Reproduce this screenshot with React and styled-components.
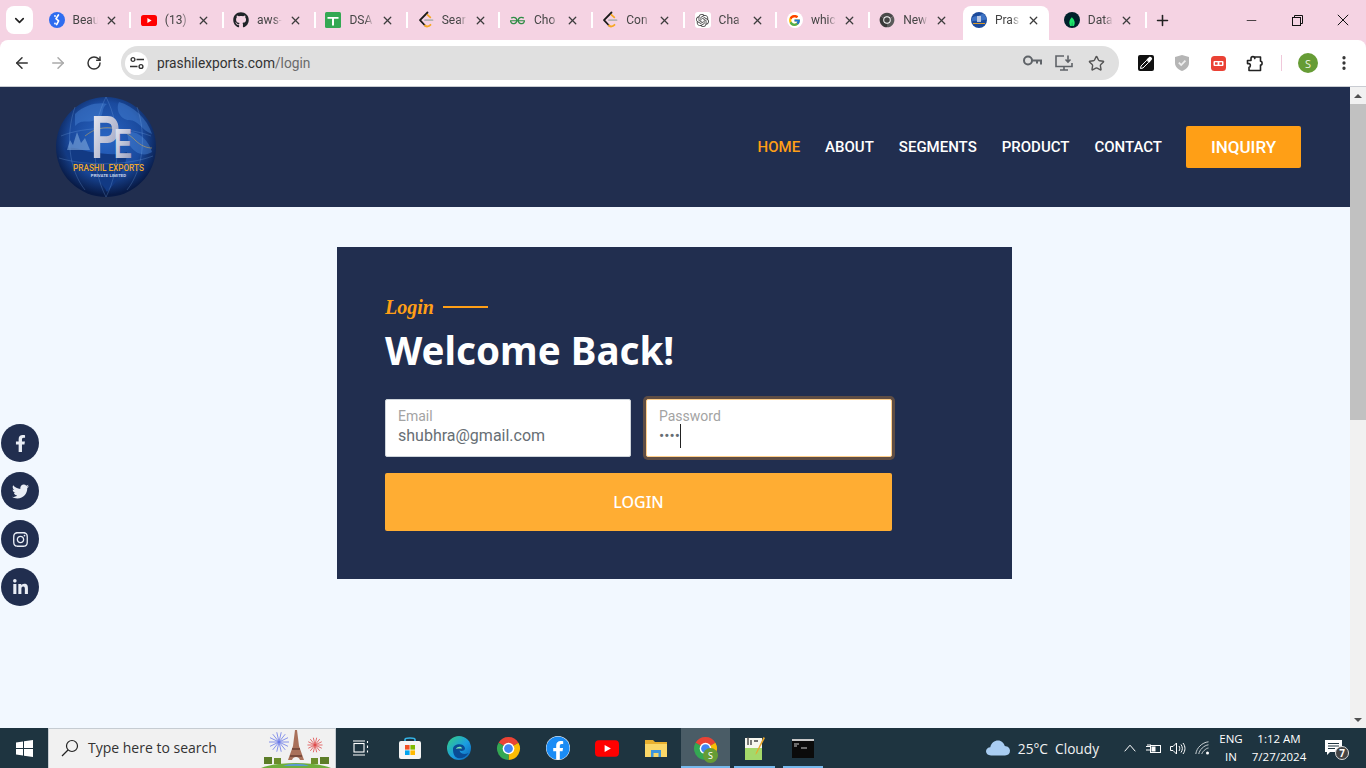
import styled, { createGlobalStyle } from 'styled-components'
import { FaFacebookF, FaTwitter, FaInstagram, FaLinkedinIn, FaGithub, FaFacebook } from 'react-icons/fa'
import { FcGoogle } from 'react-icons/fc'
import { SiOpenai, SiGeeksforgeeks, SiMongodb } from 'react-icons/si'
import { ArrowLeft, ArrowRight, RotateCw, Star, ChevronDown, X, Plus, Minus, EllipsisVertical } from 'lucide-react'

const GlobalStyle = createGlobalStyle`
    * { box-sizing: border-box; }
    html, body { margin: 0; padding: 0; overflow: hidden; }
    body { font-family: "Roboto", sans-serif; }
`

const navy = '#212e4f'
const orange = '#ff9f16'

function ChromeLogo({ size = 24, dark }) {
    return (
        <svg width={size} height={size} viewBox="0 0 24 24">
            <path d="M2.47 6.5A11 11 0 0 1 21.53 6.5L12 12Z" fill={dark ? '#4a4a4a' : '#ea4335'} />
            <path d="M21.53 6.5A11 11 0 0 1 12 23L12 12Z" fill={dark ? '#5a5a5a' : '#fbbc05'} />
            <path d="M12 23A11 11 0 0 1 2.47 6.5L12 12Z" fill={dark ? '#3a3a3a' : '#34a853'} />
            <circle cx="12" cy="12" r="5.6" fill="#fff" />
            <circle cx="12" cy="12" r="4.2" fill={dark ? '#444' : '#4285f4'} />
        </svg>
    )
}

function LeetFav() {
    return (
        <svg width="16" height="18" viewBox="0 0 16 18" fill="none" strokeLinecap="round" strokeWidth="1.8">
            <path d="M9.5 1.5 2 9.2 7 14.5" stroke="#1a1a1a" strokeLinejoin="round" />
            <path d="M7 14.5C8.5 16 10.5 15.8 12.5 13.8" stroke="#f7a823" />
            <path d="M7 9.2H14.5" stroke="#b3b3b3" />
            <path d="M9.5 3.8 12.3 6.3" stroke="#f7a823" />
        </svg>
    )
}

function BlueFav() {
    return (
        <svg width="16" height="16" viewBox="0 0 16 16">
            <circle cx="8" cy="8" r="8" fill="#2f6cf0" />
            <path d="M9.4 3 7 6.6 9.6 8.8 7.6 12.6" fill="none" stroke="#fff" strokeWidth="1.7" strokeLinecap="round" strokeLinejoin="round" />
            <circle cx="6" cy="4" r=".9" fill="#fff" />
            <circle cx="6" cy="11.5" r=".9" fill="#fff" />
        </svg>
    )
}

function YoutubeFav({ width = 16, height = 11 }) {
    return (
        <svg width={width} height={height} viewBox="0 0 16 11">
            <rect width="16" height="11" rx="2.6" fill="#f00" />
            <path d="M6.4 3.1 10.6 5.5 6.4 7.9Z" fill="#fff" />
        </svg>
    )
}

function SheetFav() {
    return (
        <svg width="16" height="16" viewBox="0 0 16 16">
            <rect width="16" height="16" rx="1.5" fill="#34a853" />
            <path d="M2.5 5H13.5V6.8H9V13.5H7V6.8H2.5Z" fill="#fff" />
        </svg>
    )
}

function GlobeFav() {
    return (
        <svg width="16" height="16" viewBox="0 0 16 16">
            <circle cx="8" cy="8" r="8" fill="#1c4a9a" />
            <path d="M1 6C4 3 7 5 9 3L12 1.5C14 3 15.5 5.5 15.8 8 12 7 10 10 6 9 4 8.5 2 9 .4 9.5Z" fill="#3d72c4" />
            <rect x="6" y="4" width="4" height="6" fill="#cfd6e6" opacity=".85" />
            <rect x="2" y="11" width="12" height="1" fill="#d99a2b" />
        </svg>
    )
}

function MongoFav() {
    return (
        <svg width="16" height="16" viewBox="0 0 16 16">
            <circle cx="8" cy="8" r="8" fill="#00212b" />
            <foreignObject x="2" y="2" width="12" height="12">
                <SiMongodb size={12} color="#1ee66b" />
            </foreignObject>
        </svg>
    )
}

const tabs = [
    { title: 'Beau', icon: <BlueFav /> },
    { title: '(13)', icon: <YoutubeFav /> },
    { title: 'aws-', icon: <FaGithub size={16} color="#1f2328" /> },
    { title: 'DSA', icon: <SheetFav /> },
    { title: 'Sear', icon: <LeetFav /> },
    { title: 'Cho', icon: <SiGeeksforgeeks size={15} color="#2f8d46" /> },
    { title: 'Con', icon: <LeetFav /> },
    { title: 'Cha', icon: <SiOpenai size={13} color="#444" />, chip: true },
    { title: 'whic', icon: <FcGoogle size={13} />, chip: true, round: true },
    { title: 'New', icon: <ChromeLogo size={16} dark /> },
    { title: 'Pras', icon: <GlobeFav />, active: true },
    { title: 'Data', icon: <MongoFav /> },
]

const navLinks = ['Home', 'About', 'Segments', 'Product', 'Contact']

const socials = [FaFacebookF, FaTwitter, FaInstagram, FaLinkedinIn]

export default function App() {
    return (
        <Screen>
            <GlobalStyle />

            <TabStrip>
                <TabSearch><ChevronDown size={15} strokeWidth={2.6} color="#222" /></TabSearch>
                {tabs.map((tab, i) => (
                    <Tab key={i} $active={tab.active} $noSep={tab.active || tab.title === 'New'}>
                        <Favicon $chip={tab.chip} $round={tab.round}>{tab.icon}</Favicon>
                        <TabTitle>{tab.title}</TabTitle>
                        <TabClose><X size={13} strokeWidth={2.4} color="#3c3c3c" /></TabClose>
                    </Tab>
                ))}
                <NewTab><Plus size={17} strokeWidth={2.2} color="#222" /></NewTab>
                <WindowControls>
                    <WindowButton><Minus size={15} strokeWidth={1.2} color="#111" /></WindowButton>
                    <WindowButton>
                        <svg width="11" height="11" viewBox="0 0 11 11" fill="none" stroke="#111">
                            <rect x=".5" y="2.5" width="8" height="8" />
                            <path d="M2.5 2.5V.5H10.5V8.5H8.5" />
                        </svg>
                    </WindowButton>
                    <WindowButton>
                        <svg width="12" height="12" viewBox="0 0 12 12" stroke="#111" strokeWidth="1"><path d="M.8.8 11.2 11.2M11.2.8.8 11.2" /></svg>
                    </WindowButton>
                </WindowControls>
            </TabStrip>

            <Toolbar>
                <ToolButton><ArrowLeft size={18} strokeWidth={2} color="#333" /></ToolButton>
                <ToolButton><ArrowRight size={18} strokeWidth={2} color="#aaa" /></ToolButton>
                <ToolButton><RotateCw size={16} strokeWidth={2.2} color="#333" /></ToolButton>
                <Omnibox>
                    <SiteInfo>
                        <svg width="14" height="14" viewBox="0 0 14 14" fill="none" stroke="#333" strokeWidth="1.4">
                            <circle cx="3" cy="3.5" r="1.9" />
                            <path d="M6.5 3.5H14M0 10.5H7.5" />
                            <circle cx="11" cy="10.5" r="1.9" />
                        </svg>
                    </SiteInfo>
                    <Url>prashilexports.com<UrlPath>/login</UrlPath></Url>
                    <OmniIcons>
                        <OmniIcon>
                            <svg width="19" height="11" viewBox="0 0 19 11" fill="none" stroke="#5f6368" strokeWidth="2">
                                <circle cx="5" cy="5.5" r="4" />
                                <path d="M9 5.5H18V9.5M14 5.5V8.5" />
                            </svg>
                        </OmniIcon>
                        <OmniIcon>
                            <svg width="18" height="16" viewBox="0 0 18 16" fill="none" stroke="#5f6368" strokeWidth="1.6">
                                <path d="M9 1H1V11.5H17V8M5 15H13M9 11.5V15" />
                                <path d="M13 .5V6.5M10.5 4.5 13 7 15.5 4.5" />
                            </svg>
                        </OmniIcon>
                        <OmniIcon><Star size={17} strokeWidth={2} color="#555" /></OmniIcon>
                    </OmniIcons>
                </Omnibox>
                <Extensions>
                    <ToolButton>
                        <svg width="16" height="16" viewBox="0 0 16 16">
                            <rect width="16" height="16" rx="2" fill="#111" />
                            <path d="M2.5 13.5 3 11 8.8 5.2 10.8 7.2 5 13Z" fill="none" stroke="#fff" />
                            <path d="M8.5 4.5 11.5 1.8C12.5 1 14.8 3.2 14 4.3L11.5 7.5Z" fill="#fff" />
                        </svg>
                    </ToolButton>
                    <ToolButton>
                        <svg width="16" height="18" viewBox="0 0 16 18">
                            <path d="M8 1 15 3V9C15 13 11.5 15.7 8 17 4.5 15.7 1 13 1 9V3Z" fill="#b5b5b5" />
                            <path d="M4.8 8.6 7.2 11 11.4 6.6" fill="none" stroke="#eee" strokeWidth="1.8" />
                        </svg>
                    </ToolButton>
                    <ToolButton>
                        <svg width="15" height="15" viewBox="0 0 15 15">
                            <rect width="15" height="15" rx="3.5" fill="#ea4235" />
                            <rect x="2.5" y="5" width="10" height="5" rx="1" fill="#fff" />
                            <rect x="4" y="6.3" width="2.6" height="2.4" fill="#ea4235" />
                            <rect x="8.4" y="6.3" width="2.6" height="2.4" fill="#ea4235" />
                        </svg>
                    </ToolButton>
                    <ToolButton>
                        <svg width="17" height="17" viewBox="0 0 17 17" fill="none" stroke="#222" strokeWidth="1.6" strokeLinejoin="round">
                            <path d="M1.5 5.5H5V3.6C5 1 8.8 1 8.8 3.6V2H14.5V6.3C16.6 6.3 16.6 10 14.5 10V15.5H3V12.3C4.8 12.3 4.8 8.6 3 8.6L1.5 8.6Z" />
                        </svg>
                    </ToolButton>
                    <ToolSeparator />
                    <ToolButton><Avatar>S</Avatar></ToolButton>
                    <ToolButton><EllipsisVertical size={18} strokeWidth={2.4} color="#333" /></ToolButton>
                </Extensions>
            </Toolbar>

            <Viewport>
                <Page>
                    <Header>
                        <Logo />
                        <Nav>
                            {navLinks.map((link, i) => (
                                <NavLink key={link} $active={i === 0}>{link}</NavLink>
                            ))}
                            <InquiryButton>Inquiry</InquiryButton>
                        </Nav>
                    </Header>

                    <Main>
                        <LoginCard>
                            <Eyebrow>Login</Eyebrow>
                            <Heading>Welcome Back!</Heading>
                            <FormGrid>
                                <Field>
                                    <FieldLabel>Email</FieldLabel>
                                    <FieldValue>shubhra@gmail.com</FieldValue>
                                </Field>
                                <Field $focused>
                                    <FieldLabel>Password</FieldLabel>
                                    <FieldValue $secret>••••<Caret /></FieldValue>
                                </Field>
                                <LoginButton>Login</LoginButton>
                            </FormGrid>
                        </LoginCard>
                    </Main>

                    <SocialRail>
                        {socials.map((Icon, i) => (
                            <SocialLink key={i}><Icon size={17} /></SocialLink>
                        ))}
                    </SocialRail>
                </Page>

                <Scrollbar>
                    <ScrollArrow $up />
                    <ScrollThumb />
                    <ScrollArrow />
                </Scrollbar>
            </Viewport>

            <Taskbar>
                <StartButton>
                    <svg width="17" height="17" viewBox="0 0 17 17" fill="#fff">
                        <path d="M0 2.4 7 1.4V8H0ZM8 1.2 17 0V8H8ZM0 9H7V15.6L0 14.6ZM8 9H17V17L8 15.8Z" />
                    </svg>
                </StartButton>
                <SearchBox>
                    <svg width="18" height="18" viewBox="0 0 18 18" fill="none" stroke="#222" strokeWidth="1.2">
                        <circle cx="11" cy="7" r="5.5" />
                        <path d="M7 11 1 17" />
                    </svg>
                    <SearchText>Type here to search</SearchText>
                    <SearchArt>
                        <EiffelArt />
                    </SearchArt>
                </SearchBox>
                <TaskIcons />
                <Tray>
                    <Weather>
                        <svg width="24" height="16" viewBox="0 0 24 16">
                            <path d="M5 15.5C1.8 15.5 0 13.5 0 11.3 0 9 2 7.3 4.3 7.3 5 3 8.5 .5 12 .5 15.5.5 18 3 18.8 6 21.8 6.2 24 8 24 10.8 24 13.6 22 15.5 19 15.5Z" fill="#a9cdf2" />
                        </svg>
                        <WeatherText>25°C&nbsp;&nbsp;Cloudy</WeatherText>
                    </Weather>
                    <TrayIcon>
                        <svg width="12" height="8" viewBox="0 0 12 8" fill="none" stroke="#fff"><path d="M.7 7.3 6 1.2 11.3 7.3" /></svg>
                    </TrayIcon>
                    <TrayIcon>
                        <svg width="16" height="11" viewBox="0 0 16 11" fill="none" stroke="#fff">
                            <rect x="4.5" y="2.5" width="10" height="7" />
                            <rect x="5.5" y="3.5" width="4" height="5" fill="#fff" stroke="none" />
                            <path d="M0 3.5H5M0 7H5M2 1V3.5M4 1V3.5" />
                        </svg>
                    </TrayIcon>
                    <TrayIcon>
                        <svg width="16" height="13" viewBox="0 0 16 13" fill="none" stroke="#fff">
                            <path d="M.5 4.5H3L6.5 1V12L3 8.5H.5Z" />
                            <path d="M9 4C10 5.5 10 7.5 9 9M11 2.5C12.8 5 12.8 8 11 10.5M13 1C15.6 4.5 15.6 8.5 13 12" />
                        </svg>
                    </TrayIcon>
                    <TrayIcon>
                        <svg width="15" height="14" viewBox="0 0 15 14" fill="none" stroke="#c9d0d4">
                            <path d="M.8 13C1.5 7 7 1.5 13.5.8M3.8 13C4.3 9 9 4.3 13.5 3.8M6.8 13C7 11 11 7.2 13.5 7" />
                            <circle cx="12.5" cy="12" r="1.5" fill="#fff" stroke="none" />
                        </svg>
                    </TrayIcon>
                    <TrayLang>ENG<br />IN</TrayLang>
                    <TrayClock>1:12 AM<br />7/27/2024</TrayClock>
                    <NotifyArea>
                        <svg width="20" height="19" viewBox="0 0 20 19">
                            <path d="M1 1H18V13H6L3 16V13H1Z" fill="#fff" />
                            <path d="M4 4.5H15M4 7H15M4 9.5H11" stroke="#1e3440" />
                        </svg>
                        <NotifyBadge>7</NotifyBadge>
                    </NotifyArea>
                </Tray>
            </Taskbar>
        </Screen>
    )
}

function Logo() {
    return (
        <svg width="102" height="102" viewBox="0 0 102 102" style={{ flexShrink: 0 }}>
            <defs>
                <radialGradient id="globe" cx="50%" cy="42%" r="56%">
                    <stop offset="0%" stopColor="#2a66c4" />
                    <stop offset="65%" stopColor="#1a4a9e" />
                    <stop offset="100%" stopColor="#081a45" />
                </radialGradient>
                <linearGradient id="mono" x1="0" y1="0" x2="1" y2="1">
                    <stop offset="0%" stopColor="#f2f3f8" />
                    <stop offset="100%" stopColor="#8d93b5" />
                </linearGradient>
            </defs>
            <circle cx="51" cy="51" r="50" fill="url(#globe)" />
            <path d="M20 18C30 8 45 6 52 8 44 14 52 20 40 24 32 28 28 22 20 30ZM64 6C78 10 92 22 97 38 86 34 84 24 74 24 66 24 60 14 64 6ZM72 36C82 34 94 44 97 56 88 62 78 56 74 48Z" fill="#4a86d8" opacity=".45" />
            <path d="M8 52C18 50 26 54 36 56 50 58 60 60 72 56 72 68 64 84 52 96 48 88 42 84 36 76 26 74 14 66 8 52Z" fill="#123a84" />
            <path d="M12 54 15 44 18 49 22 36 26 47 30 42 35 54Z" fill="#7fa8dc" opacity=".6" />
            <path d="M6 40C30 30 70 30 96 40M4 62C30 70 72 70 98 60M51 1C36 30 36 72 51 101M51 1C66 30 66 72 51 101M20 11C10 40 14 74 30 94M82 11C92 40 88 74 72 94" fill="none" stroke="#7fb0ea" strokeWidth=".5" opacity=".5" />
            <path d="M30 40C50 24 70 34 80 44 86 50 92 52 97 52" fill="none" stroke="#e0b24a" strokeWidth=".5" />
            <text x="36" y="62" textLength="29" lengthAdjust="spacingAndGlyphs" fontFamily="Liberation Sans, sans-serif" fontWeight="700" fontSize="62" fill="url(#mono)">P</text>
            <text x="59" y="62" textLength="18" lengthAdjust="spacingAndGlyphs" fontFamily="Liberation Sans, sans-serif" fontWeight="700" fontSize="43" fill="url(#mono)">E</text>
            <text x="53.5" y="75" textAnchor="middle" fontFamily="Roboto, sans-serif" fontWeight="500" fontSize="8.2" fill="#f0a92c">PRASHIL EXPORTS</text>
            <text x="53.5" y="80.5" textAnchor="middle" fontFamily="Roboto, sans-serif" fontWeight="700" fontSize="4.4" fill="#c8d4ee">PRIVATE LIMITED</text>
        </svg>
    )
}

function EiffelArt() {
    const burst = (cx, cy, r, color) =>
        Array.from({ length: 14 }, (_, i) => {
            const a = (i / 14) * Math.PI * 2
            return <line key={i} x1={cx} y1={cy} x2={cx + Math.cos(a) * r} y2={cy + Math.sin(a) * r} stroke={color} strokeWidth=".8" />
        })
    return (
        <svg width="78" height="40" viewBox="0 0 78 40">
            {burst(22, 14, 10, '#6a78e8')}
            {burst(58, 17, 7.5, '#e04a4a')}
            <path d="M38 2 40 2 42 18 47 32H43C42 28 36 28 35 32H31L36 18Z" fill="#a9705a" />
            <path d="M35 20H43V22H35ZM33 27H45V29H33Z" fill="#7a4b3c" />
            <ellipse cx="39" cy="44" rx="39" ry="9" fill="#6fae3c" />
            <path d="M26 38C32 35 46 35 52 38Z" fill="#5a9bd0" />
            <rect x="7" y="29" width="8" height="7" fill="#5c7d28" />
            <rect x="17" y="30" width="7" height="6" fill="#6b8d2c" />
            <rect x="54" y="30" width="7" height="6" fill="#6b8d2c" />
            <rect x="63" y="29" width="9" height="7" fill="#5c7d28" />
        </svg>
    )
}

function TaskIcons() {
    return (
        <TaskRow>
            <TaskCell>
                <svg width="16" height="16" viewBox="0 0 16 16" fill="none" stroke="#fff" strokeWidth="1.1">
                    <rect x="1" y="3.5" width="10" height="8.5" />
                    <path d="M0 1H12M0 15H12M14.5 1V3M14.5 5.5V8M14.5 10.5V12.5" />
                </svg>
            </TaskCell>
            <TaskCell>
                <svg width="24" height="24" viewBox="0 0 24 24">
                    <path d="M7 5V3.5C7 1.5 17 1.5 17 3.5V5" fill="none" stroke="#35b5e8" strokeWidth="1.6" />
                    <rect x="1" y="5" width="22" height="18" rx="2" fill="#f4f4f4" />
                    <rect x="7" y="9" width="4.6" height="4.6" fill="#f25022" />
                    <rect x="12.4" y="9" width="4.6" height="4.6" fill="#7fba00" />
                    <rect x="7" y="14.4" width="4.6" height="4.6" fill="#00a4ef" />
                    <rect x="12.4" y="14.4" width="4.6" height="4.6" fill="#ffb900" />
                </svg>
            </TaskCell>
            <TaskCell>
                <svg width="24" height="24" viewBox="0 0 24 24">
                    <defs>
                        <linearGradient id="edge" x1="0" y1="0" x2="1" y2="1">
                            <stop offset="0%" stopColor="#35d07f" />
                            <stop offset="55%" stopColor="#1b9de2" />
                            <stop offset="100%" stopColor="#0b5fb0" />
                        </linearGradient>
                    </defs>
                    <circle cx="12" cy="12" r="12" fill="url(#edge)" />
                    <path d="M6 13C6 8 16 6 18 12 18.5 15 14 15.5 12.5 14.5 13 18 18 19 21.5 17 19 21.5 14 23 10.5 22 6.5 20.5 6 16 6 13Z" fill="#0a4c95" />
                    <path d="M9 13C10 10 15 10 15 12.5H11C10.3 12.5 9.5 12.7 9 13Z" fill="#7fe6b0" />
                </svg>
            </TaskCell>
            <TaskCell><ChromeLogo size={25} /></TaskCell>
            <TaskCell><FaFacebook size={24} color="#1a8cf5" style={{ background: '#fff', borderRadius: '50%' }} /></TaskCell>
            <TaskCell><YoutubeFav width={24} height={17} /></TaskCell>
            <TaskCell>
                <svg width="22" height="18" viewBox="0 0 22 18">
                    <path d="M0 1H8L10 3H22V17H0Z" fill="#e9b02f" />
                    <path d="M0 5H22V18H0Z" fill="#fbd768" />
                    <path d="M6 18V11H16V18H13.5V14H8.5V18Z" fill="#3e95de" />
                </svg>
            </TaskCell>
            <TaskCell $active>
                <ChromeLogo size={25} />
                <ChromeBadge>S</ChromeBadge>
            </TaskCell>
            <TaskCell $open>
                <svg width="22" height="24" viewBox="0 0 22 24">
                    <rect x="1" y="2" width="17" height="22" fill="#a5d86a" />
                    <rect x="1" y="2" width="17" height="10" fill="#f7f7ef" />
                    <path d="M4 1V9M7 4V9M10 5H14" stroke="#444" strokeWidth="1.4" />
                    <path d="M21 2 13 17 11.5 19 12 16.5 19.5 1Z" fill="#e9a72e" />
                </svg>
            </TaskCell>
            <TaskCell $open>
                <svg width="22" height="19" viewBox="0 0 22 19">
                    <rect width="22" height="19" fill="#0b0b0b" />
                    <rect width="22" height="2" fill="#c8c8c8" />
                    <path d="M2 5H7M2 7H5M9 9H15" stroke="#ccc" />
                </svg>
            </TaskCell>
        </TaskRow>
    )
}

const Screen = styled.div`
    width: 1366px;
    height: 768px;
    display: flex;
    flex-direction: column;
    overflow: hidden;
    background-color: #f5d3e3;
`

/* browser chrome */
const TabStrip = styled.div`
    height: 40px;
    display: flex;
    align-items: flex-end;
    padding-left: 6px;
`
const TabSearch = styled.div`
    width: 27px;
    height: 28px;
    margin: 0 5px 6px 0;
    background-color: #fff;
    border-radius: 8px;
    display: flex;
    align-items: center;
    justify-content: center;
`
const Tab = styled.div`
    position: relative;
    flex: none;
    width: ${({ $active }) => ($active ? '86.3px' : '92.3px')};
    height: 34px;
    margin-left: ${({ $active }) => ($active ? '2px' : '0')};
    margin-right: ${({ $active }) => ($active ? '4px' : '0')};
    padding: 0 0 6px ${({ $active }) => ($active ? '8px' : '10.5px')};
    display: flex;
    align-items: center;
    background-color: ${({ $active }) => ($active ? '#fff' : 'transparent')};
    border-radius: 8px 8px 0 0;
    &::after {
        content: '';
        display: ${({ $noSep }) => ($noSep ? 'none' : 'block')};
        position: absolute;
        right: -1px;
        top: 6px;
        width: 2px;
        height: 16px;
        background-color: #fff;
    }
`
const Favicon = styled.span`
    flex: none;
    width: 16px;
    height: 16px;
    display: flex;
    align-items: center;
    justify-content: center;
    background-color: ${({ $chip }) => ($chip ? '#fff' : 'transparent')};
    border-radius: ${({ $round }) => ($round ? '50%' : '3px')};
`
const TabTitle = styled.span`
    width: 25px;
    margin-left: 8px;
    overflow: hidden;
    white-space: nowrap;
    font-family: "Roboto", sans-serif;
    font-size: 12px;
    color: #454545;
    -webkit-mask-image: linear-gradient(to right, #000 65%, transparent);
    mask-image: linear-gradient(to right, #000 65%, transparent);
`
const TabClose = styled.span`
    display: flex;
    margin-left: 7px;
`
const NewTab = styled.div`
    width: 34px;
    height: 40px;
    display: flex;
    align-items: center;
    justify-content: center;
`
const WindowControls = styled.div`
    margin-left: auto;
    display: flex;
`
const WindowButton = styled.div`
    width: 46px;
    height: 40px;
    display: flex;
    align-items: center;
    justify-content: center;
`
const Toolbar = styled.div`
    height: 47px;
    display: flex;
    align-items: flex-start;
    padding: 6px 0 0 4px;
    background-color: #fff;
    border-radius: 8px 8px 0 0;
    border-bottom: 1px solid #c9ccd2;
`
const ToolButton = styled.div`
    flex: none;
    width: 36px;
    height: 34px;
    display: flex;
    align-items: center;
    justify-content: center;
`
const Omnibox = styled.div`
    width: 998px;
    height: 34px;
    margin-left: 9px;
    padding: 0 7px 0 4px;
    display: flex;
    align-items: center;
    background-color: #e0e0e0;
    border-radius: 17px;
`
const SiteInfo = styled.div`
    width: 23px;
    height: 23px;
    display: flex;
    align-items: center;
    justify-content: center;
    background-color: #fff;
    border-radius: 50%;
`
const Url = styled.div`
    margin-left: 9px;
    font-family: "Roboto", sans-serif;
    font-size: 13.75px;
    color: #333;
`
const UrlPath = styled.span`
    color: #6b6b6b;
`
const OmniIcons = styled.div`
    margin-left: auto;
    display: flex;
`
const OmniIcon = styled.div`
    width: 32px;
    display: flex;
    justify-content: center;
`
const Extensions = styled.div`
    display: flex;
    margin-left: 9px;
`
const ToolSeparator = styled.div`
    width: 18px;
    height: 34px;
    display: flex;
    justify-content: center;
    align-items: center;
    &::before {
        content: '';
        width: 1px;
        height: 16px;
        background-color: #f0c8da;
    }
`
const Avatar = styled.div`
    width: 20px;
    height: 20px;
    display: flex;
    align-items: center;
    justify-content: center;
    background-color: #669c35;
    border-radius: 50%;
    color: #e8f1dc;
    font-family: "Noto Sans", sans-serif;
    font-size: 11px;
`

/* page */
const Viewport = styled.div`
    flex: 1;
    min-height: 0;
    display: flex;
`
const Page = styled.div`
    position: relative;
    flex: 1;
    background-color: #f2f8ff;
`
const Header = styled.header`
    height: 120px;
    padding: 0 49px 0 55px;
    display: flex;
    align-items: center;
    justify-content: space-between;
    background-color: ${navy};
`
const Nav = styled.nav`
    display: flex;
    align-items: center;
    gap: 25px;
`
const NavLink = styled.a`
    font-family: "Roboto", sans-serif;
    font-size: 15px;
    font-weight: 500;
    text-transform: uppercase;
    color: ${({ $active }) => ($active ? orange : '#fff')};
`
const InquiryButton = styled.a`
    width: 115px;
    height: 42px;
    margin-left: -1px;
    display: flex;
    align-items: center;
    justify-content: center;
    background-color: ${orange};
    border-radius: 2px;
    font-family: "Roboto", sans-serif;
    font-size: 17px;
    font-weight: 500;
    text-transform: uppercase;
    color: #fff;
`
const Main = styled.main`
    display: flex;
    justify-content: center;
    padding: 40px 1px 0 0;
`
const LoginCard = styled.section`
    width: 675px;
    height: 332px;
    padding: 48px;
    background-color: ${navy};
`
const Eyebrow = styled.div`
    display: flex;
    align-items: center;
    gap: 9px;
    height: 25px;
    font-family: "Liberation Serif", serif;
    font-style: italic;
    font-weight: 700;
    font-size: 20px;
    color: ${orange};
    &::after {
        content: '';
        width: 45px;
        height: 2px;
        margin-bottom: 2px;
        background-color: ${orange};
    }
`
const Heading = styled.h1`
    margin: 3px 0 22px;
    font-family: "Noto Sans", sans-serif;
    font-size: 38.6px;
    font-weight: 700;
    line-height: 54px;
    color: #fff;
`
const FormGrid = styled.div`
    width: 507px;
    display: grid;
    grid-template-columns: 246px 246px;
    gap: 16px 15px;
`
const Field = styled.div`
    height: 58px;
    padding: 8px 12px 0;
    background-color: #fff;
    border: 1px solid ${({ $focused }) => ($focused ? '#ffcf8a' : '#ced4da')};
    border-radius: 2px;
    box-shadow: ${({ $focused }) => ($focused ? '0 0 0 3px #5f4d44' : 'none')};
`
const FieldLabel = styled.div`
    font-size: 14px;
    line-height: 17px;
    color: #a3a3a3;
`
const FieldValue = styled.div`
    display: flex;
    align-items: center;
    height: 21px;
    font-size: ${({ $secret }) => ($secret ? '15.5px' : '16px')};
    color: #676e74;
`
const Caret = styled.span`
    width: 1px;
    height: 24px;
    margin-left: 0;
    background-color: #222;
`
const LoginButton = styled.button`
    grid-column: 1 / -1;
    height: 58px;
    background-color: #ffad33;
    border: none;
    border-radius: 2px;
    font-family: "Noto Sans", sans-serif;
    font-size: 16px;
    font-weight: 500;
    text-transform: uppercase;
    color: #fff;
`
const SocialRail = styled.div`
    position: absolute;
    left: 1px;
    top: 337px;
    display: flex;
    flex-direction: column;
    gap: 10px;
`
const SocialLink = styled.a`
    width: 38px;
    height: 38px;
    display: flex;
    align-items: center;
    justify-content: center;
    background-color: ${navy};
    border-radius: 50%;
    color: #e9edf5;
`
const Scrollbar = styled.div`
    width: 16px;
    display: flex;
    flex-direction: column;
    background-color: #f1f1f1;
`
const ScrollArrow = styled.div`
    height: 17px;
    display: flex;
    align-items: center;
    justify-content: center;
    margin-top: ${({ $up }) => ($up ? '0' : 'auto')};
    &::before {
        content: '';
        border-left: 4px solid transparent;
        border-right: 4px solid transparent;
        border-${({ $up }) => ($up ? 'bottom' : 'top')}: 4px solid #505050;
    }
`
const ScrollThumb = styled.div`
    height: 316px;
    background-color: #c1c1c1;
`

/* windows taskbar */
const Taskbar = styled.div`
    height: 40px;
    flex: none;
    display: flex;
    background-color: #1e3440;
`
const StartButton = styled.div`
    width: 48px;
    display: flex;
    align-items: center;
    justify-content: center;
`
const SearchBox = styled.div`
    position: relative;
    width: 288px;
    padding: 0 0 2px 12px;
    display: flex;
    align-items: center;
    background-color: #f1f1f1;
    border: 1px solid #c6ccd2;
    border-bottom: none;
`
const SearchText = styled.span`
    margin-left: 9px;
    font-family: "Open Sans", sans-serif;
    font-size: 14px;
    color: #333;
`
const SearchArt = styled.div`
    position: absolute;
    right: 0;
    bottom: 0;
    height: 40px;
`
const TaskRow = styled.div`
    display: flex;
`
const TaskCell = styled.div`
    position: relative;
    flex: none;
    width: ${({ $open }) => ($open ? '48.5px' : '49.3px')};
    display: flex;
    align-items: center;
    justify-content: center;
    background-color: ${({ $active }) => ($active ? '#4a5c66' : 'transparent')};
    &::after {
        content: '';
        display: ${({ $active, $open }) => ($active || $open ? 'block' : 'none')};
        position: absolute;
        left: ${({ $active }) => ($active ? '0' : '4px')};
        right: ${({ $active }) => ($active ? '0' : '4px')};
        bottom: 0;
        height: 2px;
        background-color: #76b9ed;
    }
`
const ChromeBadge = styled.span`
    position: absolute;
    left: 22px;
    top: 20px;
    width: 15px;
    height: 15px;
    display: flex;
    align-items: center;
    justify-content: center;
    background-color: #669c35;
    border-radius: 50%;
    font-family: "Noto Sans", sans-serif;
    font-size: 9px;
    color: #fff;
`
const Tray = styled.div`
    margin-left: auto;
    padding-right: 8px;
    display: flex;
    align-items: center;
    color: #fff;
`
const Weather = styled.div`
    display: flex;
    align-items: center;
    gap: 8px;
    margin-right: 19px;
`
const WeatherText = styled.span`
    font-family: "Open Sans", sans-serif;
    font-size: 13.7px;
    color: #f2f2f2;
`
const TrayIcon = styled.div`
    width: 24px;
    display: flex;
    justify-content: center;
`
const TrayLang = styled.div`
    width: 34px;
    text-align: center;
    font-family: "Open Sans", sans-serif;
    font-size: 11.5px;
    line-height: 18px;
`
const TrayClock = styled.div`
    width: 62px;
    text-align: center;
    font-family: "Open Sans", sans-serif;
    font-size: 11.5px;
    line-height: 18px;
`
const NotifyArea = styled.div`
    position: relative;
    width: 48px;
    display: flex;
    justify-content: center;
`
const NotifyBadge = styled.span`
    position: absolute;
    left: 25px;
    top: 7px;
    width: 14px;
    height: 14px;
    display: flex;
    align-items: center;
    justify-content: center;
    background-color: #444;
    border: 1px solid #ddd;
    border-radius: 50%;
    font-family: "Open Sans", sans-serif;
    font-size: 10px;
    font-weight: 700;
    color: #fff;
`
